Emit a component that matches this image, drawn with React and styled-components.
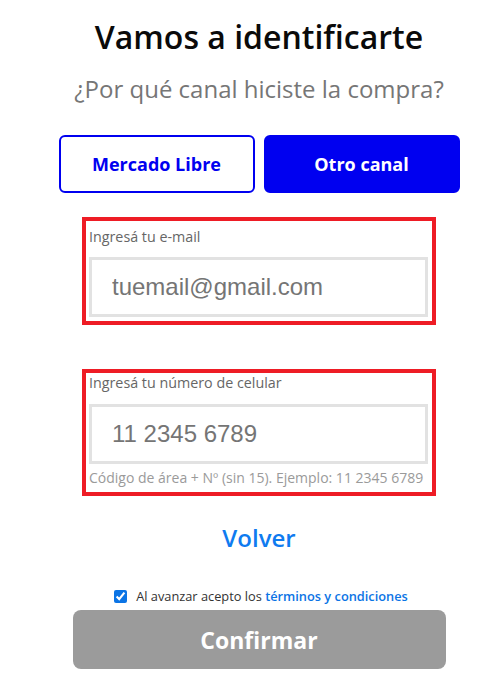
import React from 'react'
import styled, { createGlobalStyle } from 'styled-components'

const GlobalStyle = createGlobalStyle`
  body {
    margin: 0;
    background: #fff;
    font-family: 'Open Sans', 'Noto Sans', sans-serif;
  }
`

const Page = styled.div`
  display: flex;
  flex-direction: column;
  align-items: center;
  padding: 17px 0 0 15px;
`

const Title = styled.h1`
  margin: 0;
  font-size: 32px;
  line-height: 40px;
  font-weight: 600;
  color: #0a0a0a;
`

const Subtitle = styled.p`
  margin: 16px 0 0;
  font-size: 24px;
  line-height: 32px;
  color: #767676;
`

const Channels = styled.div`
  display: flex;
  gap: 9px;
  margin-top: 30px;
`

const ChannelButton = styled.button`
  width: 196px;
  height: 58px;
  border-radius: 6px;
  border: 2px solid #0000f0;
  background: ${props => props.active ? '#0000f0' : '#fff'};
  color: ${props => props.active ? '#fff' : '#0000f0'};
  font-family: 'Open Sans', sans-serif;
  font-size: 18px;
  font-weight: 700;
  cursor: pointer;
`

const FieldBox = styled.div`
  width: 339px;
  margin-top: ${props => props.gap}px;
  border: 4px solid #ee1c25;
  padding: ${props => props.top}px 4px 4px 3px;
  display: flex;
  flex-direction: column;
`

const Label = styled.label`
  font-size: 14.3px;
  line-height: 20px;
  color: #666;
  margin-bottom: ${props => props.below}px;
`

const Input = styled.input`
  box-sizing: border-box;
  width: 100%;
  height: 60px;
  border: 3px solid #e2e2e2;
  padding: 0 0 0 20px;
  font-family: 'Liberation Sans', Arial, sans-serif;
  font-size: 24px;
  color: #757575;
  outline: none;
  &::placeholder {
    color: #757575;
  }
`

const Hint = styled.div`
  margin-top: 4px;
  font-size: 14px;
  line-height: 20px;
  color: #9a9a9a;
  white-space: nowrap;
`

const BackLink = styled.a`
  margin-top: 26px;
  font-size: 24px;
  line-height: 32px;
  font-weight: 600;
  color: #0f7bf0;
  text-decoration: none;
  cursor: pointer;
`

const Terms = styled.label`
  margin-top: 33px;
  display: flex;
  align-items: center;
  gap: 9px;
  padding-left: 4px;
  font-size: 12.8px;
  line-height: 18px;
  color: #333;
  & input {
    margin: 0;
    width: 13px;
    height: 13px;
    accent-color: #0b74e5;
  }
  & a {
    color: #0b74e5;
    font-weight: 600;
    text-decoration: none;
  }
`

const Confirm = styled.button`
  margin-top: 5px;
  width: 373px;
  height: 59px;
  border: none;
  border-radius: 8px;
  background: #9b9b9b;
  color: #fff;
  font-family: 'Open Sans', sans-serif;
  font-size: 23px;
  font-weight: 700;
`

const App = () => (
  <>
    <GlobalStyle />
    <Page>
      <Title>Vamos a identificarte</Title>
      <Subtitle>¿Por qué canal hiciste la compra?</Subtitle>

      <Channels>
        <ChannelButton>Mercado Libre</ChannelButton>
        <ChannelButton active>Otro canal</ChannelButton>
      </Channels>

      <FieldBox gap={24} top={6}>
        <Label below={10}>Ingresá tu e-mail</Label>
        <Input type="email" placeholder="tuemail@gmail.com" />
      </FieldBox>

      <FieldBox gap={44} top={0}>
        <Label below={11}>Ingresá tu número de celular</Label>
        <Input type="tel" placeholder="11 2345 6789" />
        <Hint>Código de área + Nº (sin 15). Ejemplo: 11 2345 6789</Hint>
      </FieldBox>

      <BackLink>Volver</BackLink>

      <Terms>
        <input type="checkbox" defaultChecked />
        <span>Al avanzar acepto los <a href="#">términos y condiciones</a></span>
      </Terms>

      <Confirm disabled>Confirmar</Confirm>
    </Page>
  </>
)

export default App
